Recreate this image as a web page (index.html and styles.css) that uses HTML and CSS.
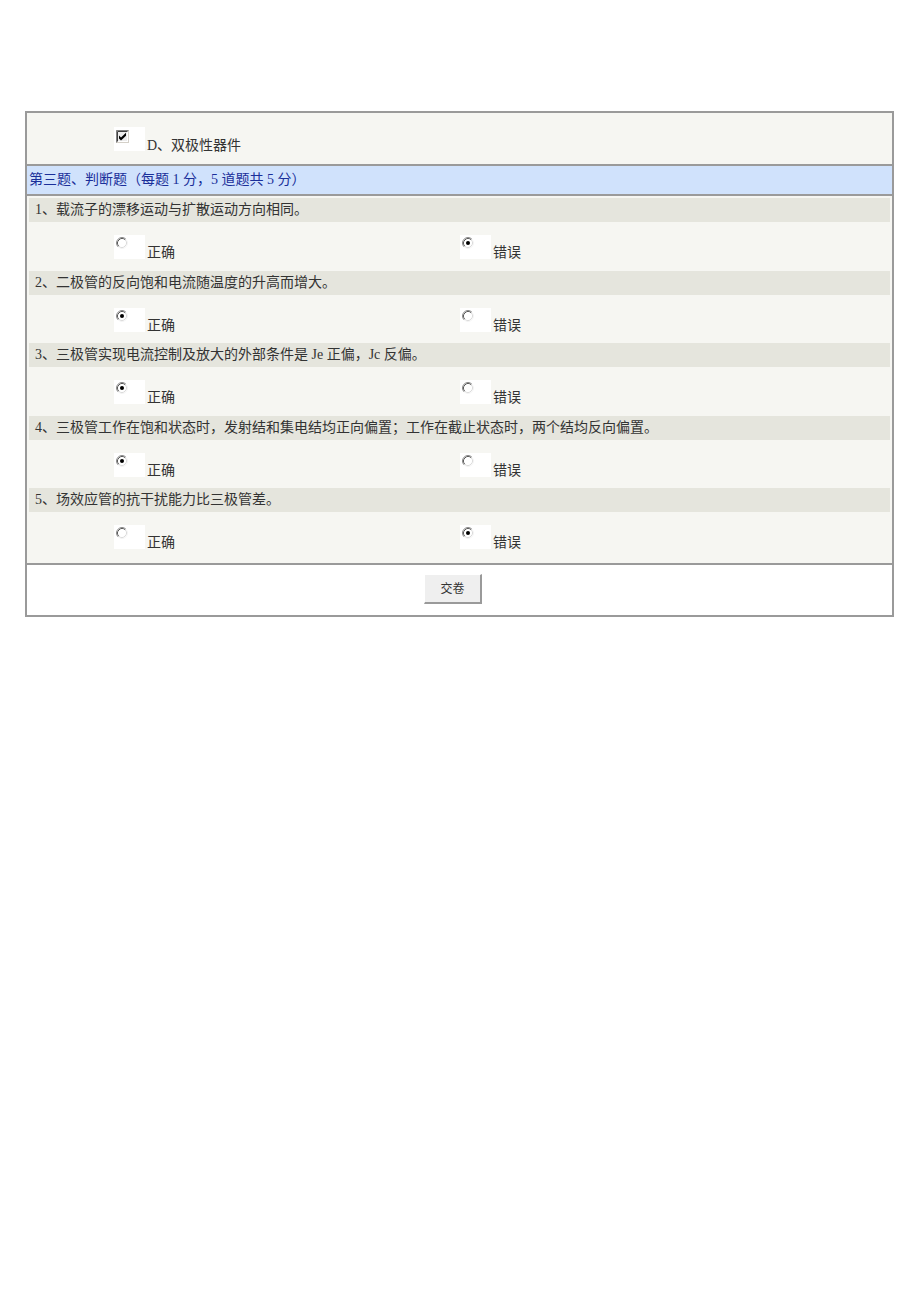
FILE: index.html
```html
<!DOCTYPE html>
<html lang="zh">
<head>
<meta charset="utf-8">
<link rel="stylesheet" href="styles.css">
</head>
<body>
<div class="exam">
  <div class="row-top">
    <div class="opt">
      <span class="ctl">
        <svg class="cb" viewBox="0 0 13 13" width="13" height="13">
          <rect x="0" y="0" width="13" height="13" fill="#ffffff"/>
          <rect x="0.5" y="0.5" width="12" height="12" fill="none" stroke="#d4d0c8"/>
          <path d="M0.5 12.5 V0.5 H12.5" fill="none" stroke="#808080"/>
          <path d="M1.5 11.5 V1.5 H11.5" fill="none" stroke="#404040"/>
          <rect x="2" y="2" width="9" height="9" fill="#ececec"/>
          <path d="M3 5.5 L5 7.5 L10 2.8 V5.8 L5 10.4 L3 8.4 Z" fill="#000"/>
        </svg>
      </span>
      <span class="lbl">D、双极性器件</span>
    </div>
  </div>
  <div class="header">第三题、判断题（每题 1 分，5 道题共 5 分）</div>
  <div class="body">
    <div class="q">1、载流子的漂移运动与扩散运动方向相同。</div>
    <div class="a">
      <div class="opt"><span class="ctl"><svg class="rd" viewBox="0 0 12 12" width="12" height="12"><circle cx="6" cy="6" r="5" fill="#fff"/><path d="M2.11 9.89 A5.5 5.5 0 0 1 9.89 2.11" fill="none" stroke="#8a8a8a"/><path d="M9.89 2.11 A5.5 5.5 0 0 1 2.11 9.89" fill="none" stroke="#f4f4f4"/><path d="M2.82 9.18 A4.5 4.5 0 0 1 9.18 2.82" fill="none" stroke="#5a5a5a"/><path d="M9.18 2.82 A4.5 4.5 0 0 1 2.82 9.18" fill="none" stroke="#dcdcdc"/></svg></span><span class="lbl">正确</span></div>
      <div class="opt"><span class="ctl"><svg class="rd" viewBox="0 0 12 12" width="12" height="12"><circle cx="6" cy="6" r="5" fill="#fff"/><path d="M2.11 9.89 A5.5 5.5 0 0 1 9.89 2.11" fill="none" stroke="#8a8a8a"/><path d="M9.89 2.11 A5.5 5.5 0 0 1 2.11 9.89" fill="none" stroke="#f4f4f4"/><path d="M2.82 9.18 A4.5 4.5 0 0 1 9.18 2.82" fill="none" stroke="#5a5a5a"/><path d="M9.18 2.82 A4.5 4.5 0 0 1 2.82 9.18" fill="none" stroke="#dcdcdc"/><circle cx="6" cy="6" r="2" fill="#000"/></svg></span><span class="lbl">错误</span></div>
    </div>
    <div class="q">2、二极管的反向饱和电流随温度的升高而增大。</div>
    <div class="a">
      <div class="opt"><span class="ctl"><svg class="rd" viewBox="0 0 12 12" width="12" height="12"><circle cx="6" cy="6" r="5" fill="#fff"/><path d="M2.11 9.89 A5.5 5.5 0 0 1 9.89 2.11" fill="none" stroke="#8a8a8a"/><path d="M9.89 2.11 A5.5 5.5 0 0 1 2.11 9.89" fill="none" stroke="#f4f4f4"/><path d="M2.82 9.18 A4.5 4.5 0 0 1 9.18 2.82" fill="none" stroke="#5a5a5a"/><path d="M9.18 2.82 A4.5 4.5 0 0 1 2.82 9.18" fill="none" stroke="#dcdcdc"/><circle cx="6" cy="6" r="2" fill="#000"/></svg></span><span class="lbl">正确</span></div>
      <div class="opt"><span class="ctl"><svg class="rd" viewBox="0 0 12 12" width="12" height="12"><circle cx="6" cy="6" r="5" fill="#fff"/><path d="M2.11 9.89 A5.5 5.5 0 0 1 9.89 2.11" fill="none" stroke="#8a8a8a"/><path d="M9.89 2.11 A5.5 5.5 0 0 1 2.11 9.89" fill="none" stroke="#f4f4f4"/><path d="M2.82 9.18 A4.5 4.5 0 0 1 9.18 2.82" fill="none" stroke="#5a5a5a"/><path d="M9.18 2.82 A4.5 4.5 0 0 1 2.82 9.18" fill="none" stroke="#dcdcdc"/></svg></span><span class="lbl">错误</span></div>
    </div>
    <div class="q">3、三极管实现电流控制及放大的外部条件是 Je 正偏，Jc 反偏。</div>
    <div class="a">
      <div class="opt"><span class="ctl"><svg class="rd" viewBox="0 0 12 12" width="12" height="12"><circle cx="6" cy="6" r="5" fill="#fff"/><path d="M2.11 9.89 A5.5 5.5 0 0 1 9.89 2.11" fill="none" stroke="#8a8a8a"/><path d="M9.89 2.11 A5.5 5.5 0 0 1 2.11 9.89" fill="none" stroke="#f4f4f4"/><path d="M2.82 9.18 A4.5 4.5 0 0 1 9.18 2.82" fill="none" stroke="#5a5a5a"/><path d="M9.18 2.82 A4.5 4.5 0 0 1 2.82 9.18" fill="none" stroke="#dcdcdc"/><circle cx="6" cy="6" r="2" fill="#000"/></svg></span><span class="lbl">正确</span></div>
      <div class="opt"><span class="ctl"><svg class="rd" viewBox="0 0 12 12" width="12" height="12"><circle cx="6" cy="6" r="5" fill="#fff"/><path d="M2.11 9.89 A5.5 5.5 0 0 1 9.89 2.11" fill="none" stroke="#8a8a8a"/><path d="M9.89 2.11 A5.5 5.5 0 0 1 2.11 9.89" fill="none" stroke="#f4f4f4"/><path d="M2.82 9.18 A4.5 4.5 0 0 1 9.18 2.82" fill="none" stroke="#5a5a5a"/><path d="M9.18 2.82 A4.5 4.5 0 0 1 2.82 9.18" fill="none" stroke="#dcdcdc"/></svg></span><span class="lbl">错误</span></div>
    </div>
    <div class="q">4、三极管工作在饱和状态时，发射结和集电结均正向偏置；工作在截止状态时，两个结均反向偏置。</div>
    <div class="a">
      <div class="opt"><span class="ctl"><svg class="rd" viewBox="0 0 12 12" width="12" height="12"><circle cx="6" cy="6" r="5" fill="#fff"/><path d="M2.11 9.89 A5.5 5.5 0 0 1 9.89 2.11" fill="none" stroke="#8a8a8a"/><path d="M9.89 2.11 A5.5 5.5 0 0 1 2.11 9.89" fill="none" stroke="#f4f4f4"/><path d="M2.82 9.18 A4.5 4.5 0 0 1 9.18 2.82" fill="none" stroke="#5a5a5a"/><path d="M9.18 2.82 A4.5 4.5 0 0 1 2.82 9.18" fill="none" stroke="#dcdcdc"/><circle cx="6" cy="6" r="2" fill="#000"/></svg></span><span class="lbl">正确</span></div>
      <div class="opt"><span class="ctl"><svg class="rd" viewBox="0 0 12 12" width="12" height="12"><circle cx="6" cy="6" r="5" fill="#fff"/><path d="M2.11 9.89 A5.5 5.5 0 0 1 9.89 2.11" fill="none" stroke="#8a8a8a"/><path d="M9.89 2.11 A5.5 5.5 0 0 1 2.11 9.89" fill="none" stroke="#f4f4f4"/><path d="M2.82 9.18 A4.5 4.5 0 0 1 9.18 2.82" fill="none" stroke="#5a5a5a"/><path d="M9.18 2.82 A4.5 4.5 0 0 1 2.82 9.18" fill="none" stroke="#dcdcdc"/></svg></span><span class="lbl">错误</span></div>
    </div>
    <div class="q">5、场效应管的抗干扰能力比三极管差。</div>
    <div class="a">
      <div class="opt"><span class="ctl"><svg class="rd" viewBox="0 0 12 12" width="12" height="12"><circle cx="6" cy="6" r="5" fill="#fff"/><path d="M2.11 9.89 A5.5 5.5 0 0 1 9.89 2.11" fill="none" stroke="#8a8a8a"/><path d="M9.89 2.11 A5.5 5.5 0 0 1 2.11 9.89" fill="none" stroke="#f4f4f4"/><path d="M2.82 9.18 A4.5 4.5 0 0 1 9.18 2.82" fill="none" stroke="#5a5a5a"/><path d="M9.18 2.82 A4.5 4.5 0 0 1 2.82 9.18" fill="none" stroke="#dcdcdc"/></svg></span><span class="lbl">正确</span></div>
      <div class="opt"><span class="ctl"><svg class="rd" viewBox="0 0 12 12" width="12" height="12"><circle cx="6" cy="6" r="5" fill="#fff"/><path d="M2.11 9.89 A5.5 5.5 0 0 1 9.89 2.11" fill="none" stroke="#8a8a8a"/><path d="M9.89 2.11 A5.5 5.5 0 0 1 2.11 9.89" fill="none" stroke="#f4f4f4"/><path d="M2.82 9.18 A4.5 4.5 0 0 1 9.18 2.82" fill="none" stroke="#5a5a5a"/><path d="M9.18 2.82 A4.5 4.5 0 0 1 2.82 9.18" fill="none" stroke="#dcdcdc"/><circle cx="6" cy="6" r="2" fill="#000"/></svg></span><span class="lbl">错误</span></div>
    </div>
  </div>
  <div class="submit-row">
    <button class="btn" type="button">交卷</button>
  </div>
</div>
</body>
</html>
```
FILE: styles.css
```css
html, body {
  margin: 0;
  padding: 0;
  background: #ffffff;
}
body {
  font-family: "Liberation Serif", "Noto Sans CJK SC", serif;
  font-size: 14px;
  color: #333333;
}
.exam {
  margin: 111px 0 0 25px;
  width: 865px;
  border: 2px solid #9a9a9a;
}
.row-top {
  height: 53px;
  background: #f6f6f2;
  box-sizing: border-box;
  padding: 14px 0 0 87px;
  border-bottom: 2px solid #9a9a9a;
}
.row-top .lbl {
  margin-bottom: -2px;
}
.header {
  height: 30px;
  box-sizing: border-box;
  background: #d0e2fc;
  color: #1a2f9a;
  padding: 6px 0 0 2px;
  line-height: 16px;
  border-bottom: 2px solid #9a9a9a;
}
.body {
  background: #f6f6f2;
  padding: 2px;
  border-bottom: 2px solid #9a9a9a;
}
.q {
  height: 24px;
  box-sizing: border-box;
  background: #e5e5dd;
  padding: 4px 0 0 6px;
  line-height: 16px;
}
.a {
  height: 48.5px;
  box-sizing: border-box;
  display: grid;
  grid-template-columns: 346px 1fr;
  align-items: start;
  padding: 13px 0 0 85px;
}
.opt {
  display: flex;
  align-items: flex-end;
}
.ctl {
  display: block;
  width: 31px;
  height: 24px;
  background: #ffffff;
  box-sizing: border-box;
  padding: 2px 0 0 2px;
}
.ctl svg {
  display: block;
}
.cb {
  margin-top: 1px;
}
.lbl {
  line-height: 14px;
  margin-left: 2px;
  margin-bottom: -1px;
}
.submit-row {
  height: 50px;
  background: #ffffff;
  display: flex;
  justify-content: center;
  align-items: flex-start;
  padding-top: 9px;
  box-sizing: border-box;
}
.btn {
  width: 58px;
  height: 30px;
  margin-left: -13px;
  background: #efefef;
  border-style: solid;
  border-width: 1px 2px 2px 1px;
  border-color: #ffffff #9a9a9a #9a9a9a #ffffff;
  font-family: "Liberation Serif", "Noto Sans CJK SC", serif;
  font-size: 12px;
  color: #333333;
  padding: 0;
}
```
